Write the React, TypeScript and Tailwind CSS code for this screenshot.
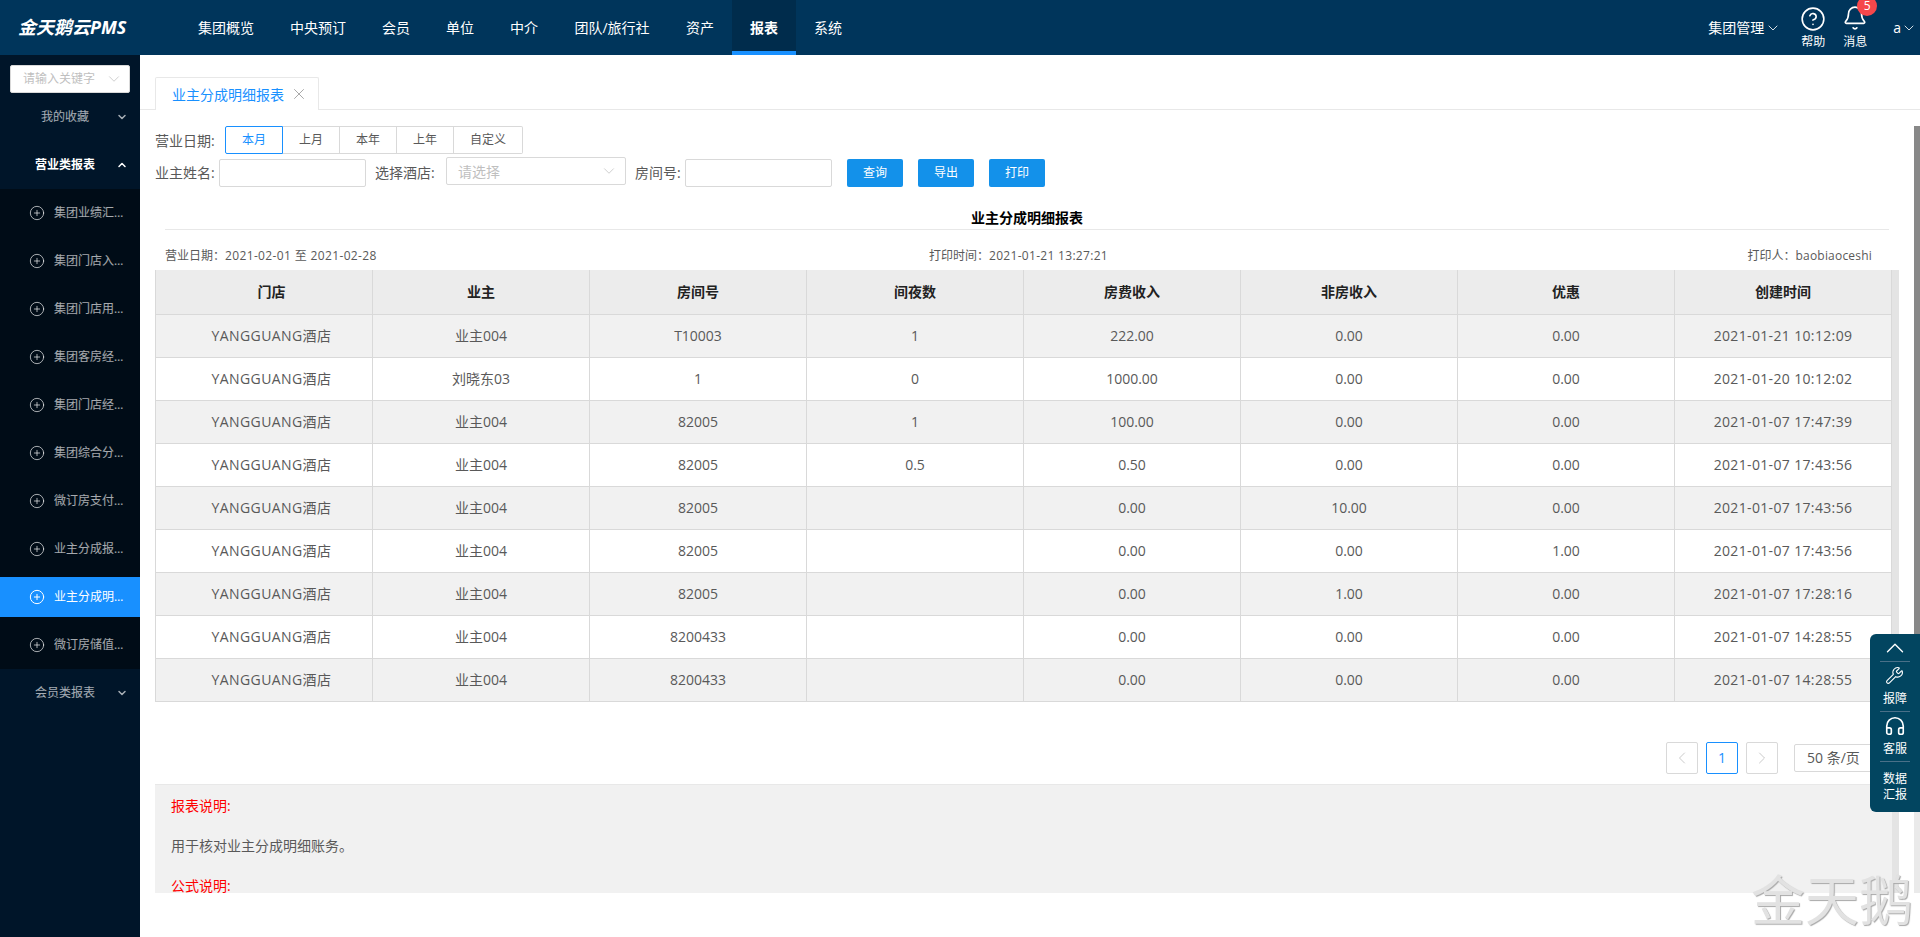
import { Bell, ChevronDown, ChevronLeft, ChevronRight, ChevronUp, CircleHelp, CirclePlus, Headphones, Wrench, X } from "lucide-react";

const navItems = ["集团概览", "中央预订", "会员", "单位", "中介", "团队/旅行社", "资产", "报表", "系统"];

const reportItems = [
  "集团业绩汇总报表",
  "集团门店入住报表",
  "集团门店用房报表",
  "集团客房经营报表",
  "集团门店经营报表",
  "集团综合分析报表",
  "微订房支付明细",
  "业主分成报表汇总",
  "业主分成明细报表",
  "微订房储值明细",
];

const columns = ["门店", "业主", "房间号", "间夜数", "房费收入", "非房收入", "优惠", "创建时间"];

const rows = [
  ["业主004", "T10003", "1", "222.00", "0.00", "0.00", "2021-01-21 10:12:09"],
  ["刘晓东03", "1", "0", "1000.00", "0.00", "0.00", "2021-01-20 10:12:02"],
  ["业主004", "82005", "1", "100.00", "0.00", "0.00", "2021-01-07 17:47:39"],
  ["业主004", "82005", "0.5", "0.50", "0.00", "0.00", "2021-01-07 17:43:56"],
  ["业主004", "82005", "", "0.00", "10.00", "0.00", "2021-01-07 17:43:56"],
  ["业主004", "82005", "", "0.00", "0.00", "1.00", "2021-01-07 17:43:56"],
  ["业主004", "82005", "", "0.00", "1.00", "0.00", "2021-01-07 17:28:16"],
  ["业主004", "8200433", "", "0.00", "0.00", "0.00", "2021-01-07 14:28:55"],
  ["业主004", "8200433", "", "0.00", "0.00", "0.00", "2021-01-07 14:28:55"],
];

function navClass(item: string) {
  if (item === "报表") return "flex items-center border-b-4 border-[#1890ff] bg-[#002c4c] px-[18px] pt-1 text-[14px] font-bold";
  if (item === "团队/旅行社") return "flex w-[112px] items-center justify-center text-[14px]";
  return "flex items-center px-[18px] text-[14px]";
}

function Header() {
  return (
    <header className="flex h-[55px] shrink-0 items-stretch bg-[#00355b] text-white">
      <div className="flex w-[180px] items-center pl-[18px] text-[18px] font-bold italic">金天鹅云PMS</div>
      <nav className="flex">
        {navItems.map((item) => (
          <div key={item} className={navClass(item)}>
            {item}
          </div>
        ))}
      </nav>
      <div className="ml-auto flex items-center">
        <span className="text-[14px]">集团管理</span>
        <ChevronDown size={16} strokeWidth={1.25} className="ml-[1px]" />
        <div className="ml-[18px] flex h-full w-[28px] flex-col items-center pt-[6px]">
          <CircleHelp size={26} strokeWidth={1.5} />
          <span className="mt-[1px] text-[12px] leading-[18px]">帮助</span>
        </div>
        <div className="relative ml-[14px] flex h-full w-[28px] flex-col items-center pt-[5px]">
          <Bell size={26} strokeWidth={1.5} />
          <span className="absolute left-[16px] top-[-4px] flex h-[20px] w-[20px] items-center justify-center rounded-full bg-[#f5474b] text-[12px]">5</span>
          <span className="mt-[2px] text-[12px] leading-[18px]">消息</span>
        </div>
        <span className="ml-[24px] text-[14px]">a</span>
        <ChevronDown size={16} strokeWidth={1.25} className="mr-[3px]" />
      </div>
    </header>
  );
}

function Sidebar() {
  return (
    <aside className="w-[140px] shrink-0 bg-[#001529] text-[12px] text-white/65">
      <div className="px-[10px] pt-[10px]">
        <div className="flex h-[28px] items-center justify-between rounded-[2px] border border-[#d9d9d9] bg-white pl-[12px] pr-[6px] text-[#bfbfbf]">
          <span>请输入关键字</span>
          <ChevronDown size={18} strokeWidth={1} />
        </div>
      </div>
      <div className="flex h-[48px] items-center">
        <span className="w-[116px] pl-[14px] text-center">我的收藏</span>
        <ChevronDown size={12} strokeWidth={3} />
      </div>
      <div className="flex h-[48px] items-center font-bold text-white">
        <span className="w-[116px] pl-[14px] text-center">营业类报表</span>
        <ChevronUp size={12} strokeWidth={3} />
      </div>
      <ul className="flex flex-col gap-[8px] bg-[#000c17] py-[4px]">
        {reportItems.map((item) => (
          <li
            key={item}
            className={
              item === "业主分成明细报表"
                ? "flex h-[40px] items-center bg-[#1890ff] pl-[30px] text-white"
                : "flex h-[40px] items-center pl-[30px]"
            }
          >
            <CirclePlus size={16} strokeWidth={1.5} className="-ml-px shrink-0" />
            <span className="ml-[9px] w-[72px] truncate">{item}</span>
          </li>
        ))}
      </ul>
      <div className="flex h-[48px] items-center">
        <span className="w-[116px] pl-[14px] text-center">会员类报表</span>
        <ChevronDown size={12} strokeWidth={3} />
      </div>
    </aside>
  );
}

function Filters() {
  return (
    <div className="pl-[15px] text-[14px] text-[#595959]">
      <div className="flex h-[28px] items-center">
        <span className="w-[70px]">营业日期:</span>
        <div className="flex text-[12px]">
          <span className="flex h-[28px] w-[58px] items-center justify-center rounded-l-[2px] border border-[#1890ff] text-[#1890ff]">本月</span>
          {["上月", "本年", "上年"].map((item) => (
            <span key={item} className="flex h-[28px] w-[57px] items-center justify-center border-y border-r border-[#d9d9d9]">{item}</span>
          ))}
          <span className="flex h-[28px] w-[69px] items-center justify-center rounded-r-[2px] border-y border-r border-[#d9d9d9]">自定义</span>
        </div>
      </div>
      <div className="mt-[3px] flex h-[30px] items-end">
        <span className="h-[28px] w-[64px] leading-[28px]">业主姓名:</span>
        <div className="h-[28px] w-[147px] rounded-[2px] border border-[#d9d9d9] bg-white" />
        <span className="ml-[9px] h-[28px] w-[71px] leading-[28px]">选择酒店:</span>
        <div className="flex h-[28px] w-[180px] items-center justify-between self-start rounded-[2px] border border-[#d9d9d9] pl-[11px] pr-[7px] text-[#bfbfbf]">
          <span>请选择</span>
          <ChevronDown size={18} strokeWidth={1} />
        </div>
        <span className="ml-[9px] h-[28px] w-[50px] leading-[28px]">房间号:</span>
        <div className="h-[28px] w-[147px] rounded-[2px] border border-[#d9d9d9] bg-white" />
        <div className="ml-[15px] flex gap-[15px] text-[12px] text-white">
          {["查询", "导出", "打印"].map((item) => (
            <span key={item} className="flex h-[28px] w-[56px] items-center justify-center rounded-[2px] bg-[#1391ea]">{item}</span>
          ))}
        </div>
      </div>
    </div>
  );
}

function ReportTable() {
  return (
    <table className="w-[1737px] table-fixed border-collapse text-center text-[14px]">
      <thead>
        <tr className="h-[44px] bg-[#ececec]">
          {columns.map((col, i) => (
            <th key={col} className={i === 0 ? "border border-t-0 border-[#d9d9d9] pl-[15px] font-bold text-[#222]" : "border border-t-0 border-[#d9d9d9] font-bold text-[#222]"}>{col}</th>
          ))}
        </tr>
      </thead>
      <tbody className="text-[#595959]">
        {rows.map((row, i) => (
          <tr key={i} className={i % 2 === 0 ? "h-[43px] bg-[#f1f1f1]" : "h-[43px] bg-white"}>
            <td className="border border-[#d9d9d9] pl-[15px] tracking-[0.4px]">YANGGUANG酒店</td>
            {row.map((cell, j) => (
              <td key={j} className={j === 6 ? "border border-[#d9d9d9] tracking-[0.35px]" : "border border-[#d9d9d9]"}>{cell}</td>
            ))}
          </tr>
        ))}
      </tbody>
    </table>
  );
}

function Pagination() {
  return (
    <div className="flex h-[82px] items-start justify-end pt-[40px] text-[14px] text-[#595959]">
      <span className="flex h-[32px] w-[32px] items-center justify-center rounded-[2px] border border-[#d9d9d9] text-[#bfbfbf]">
        <ChevronLeft size={20} strokeWidth={1} />
      </span>
      <span className="ml-[8px] flex h-[32px] w-[32px] items-center justify-center rounded-[2px] border border-[#1890ff] text-[#1890ff]">1</span>
      <span className="ml-[8px] flex h-[32px] w-[32px] items-center justify-center rounded-[2px] border border-[#d9d9d9] text-[#bfbfbf]">
        <ChevronRight size={20} strokeWidth={1} />
      </span>
      <span className="ml-[16px] mt-[2px] flex h-[28px] w-[98px] items-center rounded-[2px] border border-[#d9d9d9] pl-[12px]">50 条/页</span>
    </div>
  );
}

function ToolPanel() {
  return (
    <div className="absolute left-[1730px] top-[579px] flex h-[178px] w-[50px] flex-col items-center rounded-l-[6px] bg-[#024560] text-[12px] text-white">
      <div className="flex h-[27px] items-center">
        <ChevronUp size={30} strokeWidth={1.1} />
      </div>
      <div className="h-px w-[30px] bg-[#4a7088]" />
      <div className="flex h-[49px] flex-col items-center pt-[4px]">
        <Wrench size={19} strokeWidth={1.4} />
        <span className="mt-[5px] leading-[18px]">报障</span>
      </div>
      <div className="h-px w-[30px] bg-[#4a7088]" />
      <div className="flex h-[49px] flex-col items-center pt-[3px]">
        <Headphones size={22} strokeWidth={1.8} />
        <span className="mt-[3px] leading-[18px]">客服</span>
      </div>
      <div className="h-px w-[30px] bg-[#4a7088]" />
      <div className="pt-[9px] text-center leading-[16px]">
        数据
        <br />
        汇报
      </div>
    </div>
  );
}

export default function App() {
  return (
    <div className="flex h-[937px] w-[1920px] flex-col overflow-hidden bg-white font-['Open_Sans','Noto_Sans_CJK_SC',sans-serif]">
      <Header />
      <div className="flex min-h-0 flex-1">
        <Sidebar />
        <main className="relative flex min-w-0 flex-1 flex-col">
          <div className="h-[55px] shrink-0 border-b border-[#e8e8e8] pl-[15px] pt-[22px]">
            <div className="flex h-[33px] w-[164px] items-center rounded-t-[2px] border border-b-0 border-[#e8e8e8] bg-white pl-[16px] text-[14px] text-[#1890ff]">
              业主分成明细报表
              <X size={18} strokeWidth={1} className="ml-[6px] text-[#8c8c8c]" />
            </div>
          </div>
          <div className="flex min-h-0 flex-1">
            <div className="flex h-[838px] min-w-0 flex-1 flex-col">
              <div className="mt-[16px]">
                <Filters />
              </div>
              <div className="ml-[25px] mr-[25px] mt-[20px] h-[23px] border-b border-[#e8e8e8] text-center text-[14px] font-bold leading-[22px] text-black">
                业主分成明细报表
              </div>
              <div className="ml-[25px] mr-[42px] grid grid-cols-3 pt-[16px] text-[12px] leading-[20px] text-[#595959]">
                <span>营业日期：<span className="tracking-[0.36px]">2021-02-01 至 2021-02-28</span></span>
                <span className="text-center">打印时间：<span className="tracking-[0.3px]">2021-01-21 13:27:21</span></span>
                <span className="text-right">打印人：<span className="tracking-[0.2px]">baobiaoceshi</span></span>
              </div>
              <div className="ml-[15px] mt-[4px] flex min-h-0 flex-1">
                <div className="flex h-[623px] w-[1737px] flex-col">
                  <ReportTable />
                  <Pagination />
                  <div className="h-[109px] overflow-hidden border-t border-[#e8e8e8] bg-[#f1f1f1] pl-[16px] text-[14px] leading-[20px] text-[#595959]">
                    <p className="mt-[11px] text-[#ff0000]">报表说明:</p>
                    <p className="mt-[20px]">用于核对业主分成明细账务。</p>
                    <p className="mt-[20px] text-[#ff0000]">公式说明:</p>
                    <p className="mt-[20px]">实际分成金额=房费收入+非房收入-优惠</p>
                  </div>
                </div>
                <div className="h-[623px] w-[7px] bg-[#e4e4e4]" />
              </div>
            </div>
            <div className="flex h-[783px] w-[6px] shrink-0 flex-col pt-[16px]">
              <div className="h-[520px] bg-[#888888]" />
              <div className="flex-1 bg-[#eaeaea]" />
            </div>
          </div>
          <ToolPanel />
          <span className="absolute bottom-[8px] right-[7px] text-[54px] leading-[58px] text-[#e2e2e2] [text-shadow:1px_1px_1px_#a8a8a8]">金天鹅</span>
        </main>
      </div>
    </div>
  );
}
